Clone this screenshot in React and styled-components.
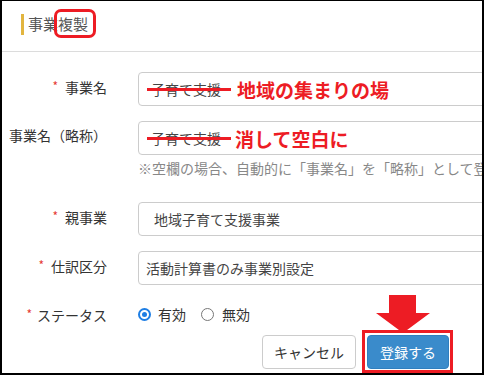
import styled, { createGlobalStyle } from 'styled-components';

const GlobalStyle = createGlobalStyle`
  html, body {
    margin: 0;
    padding: 0;
    background: #fff;
  }
  body {
    font-family: "Noto Sans CJK JP", "Noto Sans", sans-serif;
    color: #333;
  }
`;

const Frame = styled.div`
  width: 484px;
  height: 375px;
  box-sizing: border-box;
  border: 2px solid #000;
  border-top-width: 1px;
  overflow: hidden;
  background: #fff;
`;

const Header = styled.div`
  display: flex;
  align-items: center;
  height: 51px;
  box-sizing: border-box;
  padding: 0 0 4px 19px;
  border-bottom: 1px solid #dcdcdc;
  font-size: 15px;
  line-height: 20px;
  color: #555;
`;

const Bar = styled.span`
  width: 3px;
  height: 21px;
  margin-right: 4px;
  background: #e2b53f;
`;

const Marked = styled.span`
  position: relative;
  &::after {
    content: '';
    position: absolute;
    left: -4px;
    right: -8px;
    top: -5px;
    bottom: -4px;
    border: 3px solid #ed1c24;
    border-radius: 7px;
  }
`;

const Body = styled.div`
  padding-top: 20px;
`;

const Row = styled.div`
  display: flex;
  align-items: ${(p) => (p.$center ? 'center' : 'flex-start')};
  margin-top: ${(p) => p.$top || 0}px;
  height: ${(p) => (p.$center ? '20px' : 'auto')};
`;

const Label = styled.div`
  width: 105px;
  flex-shrink: 0;
  margin-right: 31px;
  padding-top: ${(p) => (p.$flat ? 0 : 4)}px;
  text-align: right;
  font-size: 14px;
  line-height: 20px;
  color: #333;
  white-space: nowrap;
`;

const Required = styled.span`
  color: #e53935;
  font-size: 12px;
  margin-right: ${(p) => p.$gap || 7}px;
  vertical-align: 2px;
`;

const Field = styled.div`
  display: flex;
  align-items: center;
  flex-shrink: 0;
  width: 400px;
  height: 34px;
  box-sizing: border-box;
  padding-left: ${(p) => p.$pad}px;
  border: 1px solid #ccc;
  border-radius: 4px;
  background: #fff;
  font-size: 14px;
  color: #444;
  white-space: nowrap;
`;

const Struck = styled.span`
  position: relative;
  &::after {
    content: '';
    position: absolute;
    left: -4px;
    right: -10px;
    top: 50%;
    height: 3px;
    margin-top: -1px;
    background: #ed1c24;
  }
`;

const Note = styled.span`
  margin-left: ${(p) => p.$gap}px;
  font-size: 19px;
  font-weight: 700;
  color: #ed1c24;
`;

const Help = styled.div`
  margin-top: 3px;
  padding-left: 136px;
  font-size: 14px;
  line-height: 20px;
  color: #888;
  white-space: nowrap;
`;

const Radios = styled.div`
  display: flex;
  align-items: center;
  font-size: 14px;
  line-height: 20px;
  color: #333;
`;

const Radio = styled.span`
  position: relative;
  width: 13px;
  height: 13px;
  box-sizing: border-box;
  margin-right: ${(p) => (p.$on ? 7 : 8)}px;
  margin-left: ${(p) => p.$left || 0}px;
  border-radius: 50%;
  border: ${(p) => (p.$on ? '2px solid #1e7ee4' : '1px solid #777')};
  &::after {
    content: '';
    display: ${(p) => (p.$on ? 'block' : 'none')};
    position: absolute;
    left: 2px;
    top: 2px;
    width: 5px;
    height: 5px;
    border-radius: 50%;
    background: #1e7ee4;
  }
`;

const Footer = styled.div`
  display: flex;
  justify-content: flex-end;
  gap: 11px;
  margin-top: 11px;
  padding-right: 33px;
`;

const Button = styled.button`
  width: ${(p) => p.$w}px;
  height: 34px;
  padding: 0;
  border-radius: 4px;
  border: 1px solid ${(p) => (p.$primary ? '#2f7fbf' : '#ccc')};
  background: ${(p) => (p.$primary ? '#3a8bcb' : '#fff')};
  color: ${(p) => (p.$primary ? '#fff' : '#333')};
  font-family: inherit;
  font-size: 14px;
  line-height: 20px;
`;

const Callout = styled.div`
  position: relative;
  &::after {
    content: '';
    position: absolute;
    left: -5px;
    right: -4px;
    top: -5px;
    bottom: -4px;
    border: 3px solid #ed1c24;
  }
`;

const Arrow = styled.svg`
  position: absolute;
  left: 9px;
  top: -40px;
`;

export default function App() {
  return (
    <>
      <GlobalStyle />
      <Frame>
        <Header>
          <Bar />
          事業<Marked>複製</Marked>
        </Header>
        <Body>
          <Row>
            <Label>
              <Required>*</Required>事業名
            </Label>
            <Field $pad={12}>
              <Struck>子育て支援</Struck>
              <Note $gap={16}>地域の集まりの場</Note>
            </Field>
          </Row>
          <Row $top={15}>
            <Label>事業名（略称）</Label>
            <Field $pad={12}>
              <Struck>子育て支援</Struck>
              <Note $gap={14}>消して空白に</Note>
            </Field>
          </Row>
          <Help>※空欄の場合、自動的に「事業名」を「略称」として登録します。</Help>
          <Row $top={24}>
            <Label>
              <Required>*</Required>親事業
            </Label>
            <Field $pad={15}>地域子育て支援事業</Field>
          </Row>
          <Row $top={15}>
            <Label>
              <Required>*</Required>仕訳区分
            </Label>
            <Field $pad={7}>活動計算書のみ事業別設定</Field>
          </Row>
          <Row $top={19} $center>
            <Label $flat>
              <Required $gap={5}>*</Required>ステータス
            </Label>
            <Radios>
              <Radio $on />
              有効
              <Radio $left={15} />
              無効
            </Radios>
          </Row>
          <Footer>
            <Button $w={94}>キャンセル</Button>
            <Callout>
              <Arrow width="54" height="38" viewBox="0 0 54 38">
                <polygon
                  points="13,0 40,0 40,18 54,18 27,38 0,18 13,18"
                  fill="#ed1c24"
                />
              </Arrow>
              <Button $w={82} $primary>
                登録する
              </Button>
            </Callout>
          </Footer>
        </Body>
      </Frame>
    </>
  );
}
